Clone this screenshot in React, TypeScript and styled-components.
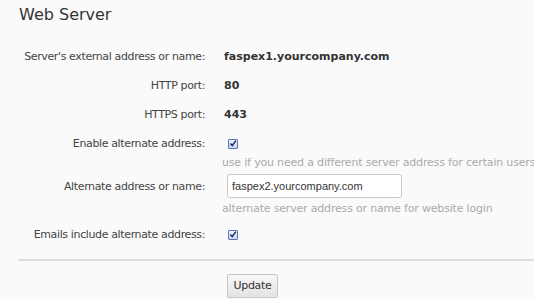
import React from 'react';
import styled, { createGlobalStyle } from 'styled-components';

const GlobalStyle = createGlobalStyle`
  html, body {
    margin: 0;
    padding: 0;
    background: #fafafa;
  }
  body {
    font-family: 'DejaVu Sans', Verdana, sans-serif;
    color: #444;
  }
`;

type Row = {
  label: string;
  kind: 'value' | 'check' | 'input';
  value?: string;
  hint?: string;
  pad: string;
};

const rows: Row[] = [
  { label: "Server's external address or name:", kind: 'value', value: 'faspex1.yourcompany.com', pad: '7px 0' },
  { label: 'HTTP port:', kind: 'value', value: '80', pad: '7px 0' },
  { label: 'HTTPS port:', kind: 'value', value: '443', pad: '7px 0' },
  {
    label: 'Enable alternate address:',
    kind: 'check',
    hint: 'use if you need a different server address for certain users',
    pad: '7px 0 0',
  },
  {
    label: 'Alternate address or name:',
    kind: 'input',
    value: 'faspex2.yourcompany.com',
    hint: 'alternate server address or name for website login',
    pad: '4.5px 0 0',
  },
  { label: 'Emails include alternate address:', kind: 'check', pad: '11px 0 0' },
];

const Checkbox: React.FC = () => (
  <CheckBox>
    <svg width="9" height="9" viewBox="0 0 9 9">
      <path d="M1.6 4.6 L3.6 6.8 L7.8 1.2" fill="none" stroke="#1c2f66" strokeWidth="1.6" />
    </svg>
  </CheckBox>
);

const App: React.FC = () => {
  return (
    <Page>
      <GlobalStyle />
      <Title>Web Server</Title>
      <Form>
        {rows.map((row) => (
          <Field key={row.label} $pad={row.pad}>
            <Label $boxed={row.kind === 'input'}>{row.label}</Label>
            <Control>
              {row.kind === 'value' && <Value>{row.value}</Value>}
              {row.kind === 'check' && (
                <CheckCell>
                  <Checkbox />
                </CheckCell>
              )}
              {row.kind === 'input' && <TextInput defaultValue={row.value} />}
              {row.hint && <Hint $gap={row.kind === 'input' ? 2.5 : 4}>{row.hint}</Hint>}
            </Control>
          </Field>
        ))}
      </Form>
      <Divider />
      <Actions>
        <Button type="button">Update</Button>
      </Actions>
    </Page>
  );
};

const Page = styled.div`
  padding: 0 0 0 18px;
  width: 516px;
  overflow: hidden;
`;

const Title = styled.h2`
  margin: 0;
  padding: 5px 0 0 1px;
  font-size: 16px;
  font-weight: normal;
  line-height: 20px;
  color: #333;
`;

const Form = styled.div`
  display: flex;
  flex-direction: column;
  padding-top: 16.5px;
`;

const Field = styled.div<{ $pad: string }>`
  display: grid;
  grid-template-columns: 187px 1fr;
  column-gap: 19px;
  align-items: start;
  padding: ${(p) => p.$pad};
  font-size: 11px;
  line-height: 15px;
`;

const Label = styled.div<{ $boxed?: boolean }>`
  text-align: right;
  white-space: nowrap;
  letter-spacing: -0.37px;
  color: #444;
  padding-top: ${(p) => (p.$boxed ? '4.5px' : '0')};
`;

const Control = styled.div`
  display: flex;
  flex-direction: column;
  align-items: flex-start;
  white-space: nowrap;
`;

const Value = styled.span`
  font-weight: bold;
  color: #333;
`;

const CheckCell = styled.div`
  height: 15px;
  display: flex;
  align-items: center;
`;

const CheckBox = styled.span`
  display: inline-flex;
  align-items: center;
  justify-content: center;
  width: 8px;
  height: 8px;
  margin: 1px 0 0 4px;
  border: 1px solid #5877b4;
  border-radius: 1px;
  background: linear-gradient(#eef3fc, #c9d8f2);

  svg {
    margin-top: -1px;
  }
`;

const TextInput = styled.input`
  box-sizing: border-box;
  width: 175px;
  height: 24px;
  margin: 0 0 0 3px;
  padding: 0 4px;
  border: 1px solid #c8c8c8;
  border-radius: 3px;
  background: #fff;
  font-family: 'Liberation Sans', Arial, sans-serif;
  font-size: 11px;
  color: #333;
  outline: none;
`;

const Hint = styled.span<{ $gap: number }>`
  margin: ${(p) => p.$gap}px 0 0 -2px;
  letter-spacing: -0.18px;
  color: #aaa;
`;

const Divider = styled.hr`
  margin: 17px 0 0;
  border: none;
  border-top: 2px solid #dedede;
`;

const Actions = styled.div`
  padding: 13px 0 0 209px;
`;

const Button = styled.button`
  width: 51px;
  height: 24px;
  padding: 0;
  border: 1px solid #c6c6c6;
  border-radius: 2px;
  background: linear-gradient(#f7f7f7, #e3e3e3);
  font-family: 'DejaVu Sans', Verdana, sans-serif;
  font-size: 11px;
  letter-spacing: -0.3px;
  color: #333;
`;

export default App;
